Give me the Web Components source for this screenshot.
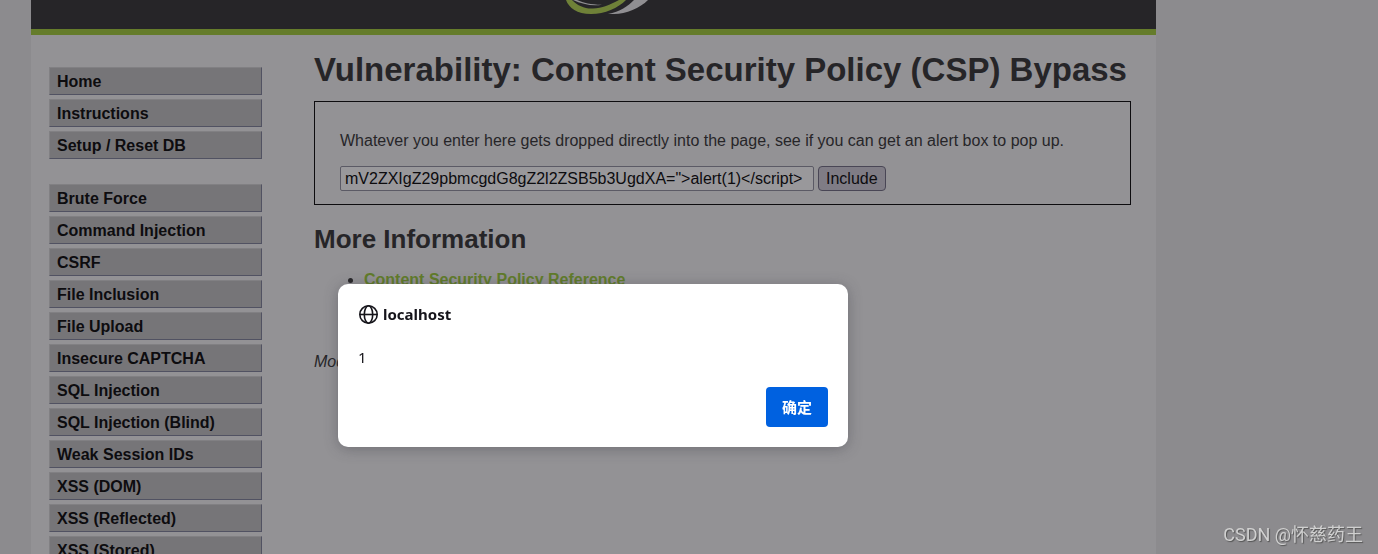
<!DOCTYPE html>
<html lang="en">
<head>
<meta charset="utf-8">
<meta name="viewport" content="width=device-width, initial-scale=1">
<title>Vulnerability: Content Security Policy (CSP) Bypass</title>
<style>
  html { height: 100%; overflow: hidden; background: #e7e7e7; }
  body {
    margin: 0;
    height: 100%;
    overflow: hidden;
    font: 16px/20px "Liberation Sans", "Noto Sans CJK SC", sans-serif;
    color: #2f2f2f;
  }
</style>
</head>
<body>
<lab-page>
  <side-menu slot="menu"></side-menu>
  <csp-module></csp-module>
</lab-page>
<alert-dialog host="localhost" button="确定">1</alert-dialog>
<water-mark>CSDN @怀慈药王</water-mark>

<script>
/** <lab-page> - header, menu column and main column. */
class LabPage extends HTMLElement {
  connectedCallback() {
    this.attachShadow({ mode: 'open' }).innerHTML = `
      <style>
        :host { display: block; height: 100%; padding: 0 191px 0 0; box-sizing: border-box; }
        .container {
          max-width: 1125px;
          min-height: 100%;
          margin: 0 auto;
          background: #f4f4f4;
        }
        header {
          display: flex;
          justify-content: center;
          height: 29px;
          background: #2f2f2f;
          border-bottom: 6px solid #a1cc33;
        }
        svg { display: block; }
        .columns { display: flex; align-items: flex-start; }
        nav { flex: none; width: 213px; padding: 32px 52px 0 18px; }
        main { flex: 1; min-width: 0; padding: 15px 25px 0 0; }
      </style>
      <div class="container">
        <header>
          <svg width="119" height="15" viewBox="0 0 119 15" aria-hidden="true">
            <path d="M32 0C35 8 43 14 57 14C71 14 84 8 92 0H85C76 5 68 8 59 8.500C51 9 44 6 38 0Z" fill="#b2d64c"/>
            <path d="M43 0C50 3 56 4.500 68 4.800C58 6.500 48 4 39 0Z" fill="#eee"/>
            <path d="M74 14C86 12 94 6 100 0H114C106 8 92 14 80 14Z" fill="#eee"/>
          </svg>
        </header>
        <div class="columns">
          <nav><slot name="menu"></slot></nav>
          <main><slot></slot></main>
        </div>
      </div>
    `;
  }
}

/** <side-menu> - grouped links to the modules. */
class SideMenu extends HTMLElement {
  connectedCallback() {
    const groups = [
      ['Home', 'Instructions', 'Setup / Reset DB'],
      ['Brute Force', 'Command Injection', 'CSRF', 'File Inclusion', 'File Upload',
        'Insecure CAPTCHA', 'SQL Injection', 'SQL Injection (Blind)', 'Weak Session IDs',
        'XSS (DOM)', 'XSS (Reflected)', 'XSS (Stored)'],
    ];
    this.attachShadow({ mode: 'open' }).innerHTML = `
      <style>
        :host { display: flex; flex-direction: column; gap: 25px; }
        ul {
          display: flex;
          flex-direction: column;
          gap: 4px;
          margin: 0;
          padding: 0;
          list-style: none;
        }
        a {
          display: block;
          padding: 4px 7px 2px;
          border: 1px solid;
          border-color: #d4d4d4 #7c8098 #7c8098 #d4d4d4;
          background: #c0c0c0;
          color: #000;
          font-weight: bold;
          text-decoration: none;
        }
      </style>
      ${groups.map((items) => `<ul>${items.map((t) => `<li><a href="#">${t}</a></li>`).join('')}</ul>`).join('')}
    `;
  }
}

/** <csp-module> - the exercise form and its references. */
class CspModule extends HTMLElement {
  connectedCallback() {
    this.attachShadow({ mode: 'open' }).innerHTML = `
      <style>
        :host { display: block; }
        h1 { margin: 0 0 11px; font-size: 33px; line-height: 40px; }
        h2 { margin: 18px 0 15px; font-size: 26px; line-height: 32px; }
        form { padding: 29px 25px 13px; border: 1px solid #000; }
        label { display: block; margin-bottom: 15px; }
        .row { display: flex; gap: 4px; }
        input, button {
          box-sizing: border-box;
          height: 25px;
          margin: 0;
          font: inherit;
          color: #000;
        }
        input {
          width: 474px;
          min-width: 0;
          padding: 0 4px;
          border: 1px solid #8f8f9d;
          border-radius: 2px;
          background: #fff;
        }
        button {
          padding: 0 7px;
          border: 1px solid #6e6a80;
          border-radius: 4px;
          background: #d0cdd8;
        }
        ul { margin: 0; padding: 0 0 0 50px; }
        a { color: #99cc33; font-weight: bold; text-decoration: none; }
        .credit { margin: 62px 0 0; font-style: italic; }
      </style>
      <h1>Vulnerability: Content Security Policy (CSP) Bypass</h1>
      <form>
        <label for="include">Whatever you enter here gets dropped directly into the page, see if you can get an alert box to pop up.</label>
        <div class="row">
          <input id="include" type="text">
          <button type="button">Include</button>
        </div>
      </form>
      <h2>More Information</h2>
      <ul><li><a href="#">Content Security Policy Reference</a></li></ul>
      <p class="credit">Mod</p>
    `;
    this.shadowRoot.querySelector('input').value =
      'mV2ZXIgZ29pbmcgdG8gZ2l2ZSB5b3UgdXA=">alert(1)<' + '/script>';
  }
}

/** <alert-dialog host button> - modal message over a dimmed page. */
class AlertDialog extends HTMLElement {
  connectedCallback() {
    this.attachShadow({ mode: 'open' }).innerHTML = `
      <style>
        :host {
          position: fixed;
          inset: 0;
          display: flex;
          align-items: flex-start;
          justify-content: center;
          padding: 284px 192px 0 0;
          background: rgba(28, 27, 34, 0.45);
          font: 15px/20px "Noto Sans", "Noto Sans CJK SC", sans-serif;
          color: #15141a;
        }
        .box {
          box-sizing: border-box;
          width: 510px;
          max-width: 100%;
          padding: 20px;
          border-radius: 10px;
          background: #fff;
          box-shadow: 0 2px 14px rgba(58, 57, 68, 0.4);
        }
        .title { display: flex; align-items: center; gap: 4px; font-weight: bold; }
        .message { margin: 23px 0 20px; }
        .actions { display: flex; justify-content: flex-end; }
        button {
          width: 62px;
          height: 40px;
          padding: 0;
          border: 0;
          border-radius: 4px;
          background: #0061e0;
          color: #fff;
          font: bold 15px/20px "Noto Sans CJK SC", sans-serif;
        }
      </style>
      <div class="box" role="alertdialog" aria-modal="true" aria-labelledby="host">
        <div class="title">
          <svg width="21" height="20" viewBox="0 0 21 20" fill="none" stroke="#15141a" stroke-width="1.6" aria-hidden="true">
            <circle cx="10.5" cy="10.5" r="8.7"/>
            <ellipse cx="10.5" cy="10.5" rx="4.2" ry="8.7"/>
            <path d="M2 10.5H19"/>
          </svg>
          <span id="host">${this.getAttribute('host')}</span>
        </div>
        <div class="message"><slot></slot></div>
        <div class="actions"><button type="button">${this.getAttribute('button')}</button></div>
      </div>
    `;
  }
}

/** <water-mark> - author tag in the bottom right corner. */
class WaterMark extends HTMLElement {
  connectedCallback() {
    this.attachShadow({ mode: 'open' }).innerHTML = `
      <style>
        :host {
          position: fixed;
          right: 15px;
          bottom: 7px;
          font: 18px/24px Roboto, "Noto Sans CJK SC", sans-serif;
          color: #d0d0d0;
          text-shadow: 1px 1px 1px #555;
        }
      </style>
      <slot></slot>
    `;
  }
}

customElements.define('lab-page', LabPage);
customElements.define('side-menu', SideMenu);
customElements.define('csp-module', CspModule);
customElements.define('alert-dialog', AlertDialog);
customElements.define('water-mark', WaterMark);
</script>
</body>
</html>
